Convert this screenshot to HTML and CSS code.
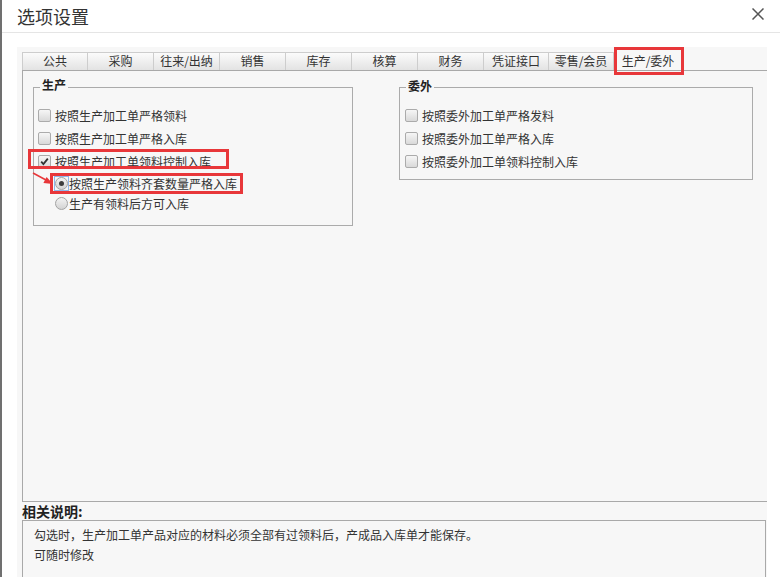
FILE: index.html
```html
<!DOCTYPE html>
<html lang="zh-CN">
<head>
<meta charset="utf-8">
<title>选项设置</title>
<link rel="stylesheet" href="styles.css">
</head>
<body>
<div class="dialog">
  <div class="header">
    <span class="title">选项设置</span>
    <svg class="close" viewBox="0 0 12 12" width="12" height="12"><path d="M0.5 0.5 L11.5 11.5 M11.5 0.5 L0.5 11.5" stroke="#555" stroke-width="1.5" fill="none"/></svg>
  </div>
  <div class="content">
    <div class="tabs">
      <div class="tab">公共</div>
      <div class="tab">采购</div>
      <div class="tab">往来/出纳</div>
      <div class="tab">销售</div>
      <div class="tab">库存</div>
      <div class="tab">核算</div>
      <div class="tab">财务</div>
      <div class="tab narrow">凭证接口</div>
      <div class="tab narrow">零售/会员</div>
      <div class="tab active">生产/委外</div>
    </div>
    <div class="panel">
      <div class="group group-prod">
        <span class="legend">生产</span>
        <div class="row"><span class="cb"></span><span>按照生产加工单严格领料</span></div>
        <div class="row"><span class="cb"></span><span>按照生产加工单严格入库</span></div>
        <div class="row"><span class="cb checked"><svg viewBox="0 0 11 11" width="11" height="11"><path d="M2.2 5.6 L4.4 8 L8.8 2.6" stroke="#333" stroke-width="1.8" fill="none"/></svg></span><span>按照生产加工单领料控制入库</span></div>
        <div class="row radio first"><span class="rb-wrap focus"><span class="rb on"></span></span><span>按照生产领料齐套数量严格入库</span></div>
        <div class="row radio"><span class="rb-wrap"><span class="rb"></span></span><span>生产有领料后方可入库</span></div>
      </div>
      <div class="group group-out">
        <span class="legend">委外</span>
        <div class="row"><span class="cb"></span><span>按照委外加工单严格发料</span></div>
        <div class="row"><span class="cb"></span><span>按照委外加工单严格入库</span></div>
        <div class="row"><span class="cb"></span><span>按照委外加工单领料控制入库</span></div>
      </div>
    </div>
    <div class="desc-label">相关说明:</div>
    <div class="desc">
      <div>勾选时，生产加工单产品对应的材料必须全部有过领料后，产成品入库单才能保存。</div>
      <div>可随时修改</div>
    </div>
  </div>
</div>
<div class="mark mark-tab"></div>
<div class="mark mark-row"></div>
<div class="mark mark-radio"></div>
<svg class="arrow" viewBox="0 0 60 30" width="60" height="30"><path d="M33 173 L46 180" transform="translate(-20,-160)" stroke="#e8373a" stroke-width="1.5" fill="none"/><polygon points="53,184 43.4,183.1 46.6,176.9" transform="translate(-20,-160)" fill="#e8373a"/></svg>
</body>
</html>
```
FILE: styles.css
```css
body {
  margin: 0;
  width: 780px;
  height: 577px;
  overflow: hidden;
  position: relative;
  background: #fff;
  font-family: "Noto Sans CJK SC", "Microsoft YaHei", "Liberation Sans", sans-serif;
  font-size: 12px;
  color: #333;
}

.dialog {
  height: 577px;
  box-sizing: border-box;
  border-left: 2px solid #707070;
}

.header {
  height: 32px;
  border-bottom: 1px solid #e5e5e5;
  display: flex;
  align-items: center;
  justify-content: space-between;
  padding: 0 16px 0 15px;
}

.title {
  font-size: 18px;
  line-height: 20px;
  color: #333;
}

.close {
  display: block;
  margin-top: -4px;
}

.content {
  margin: 14px 0 0 15px;
  width: 750px;
  height: 531px;
  box-sizing: border-box;
  background: #f7f7f7;
  padding: 5px 0 0 5px;
}

.tabs {
  display: flex;
  height: 18px;
}

.tab {
  width: 66px;
  box-sizing: border-box;
  border: 1px solid #cdcdcd;
  border-left: none;
  border-bottom: none;
  background: linear-gradient(#fbfbfb, #e3e3e3);
  text-align: center;
  line-height: 16px;
  color: #333;
}

.tab:first-child {
  border-left: 1px solid #cdcdcd;
}

.tab.narrow {
  width: 65px;
}

.tab.active {
  width: 68px;
  border: none;
  background: transparent;
  line-height: 18px;
}

.panel {
  height: 432px;
  box-sizing: border-box;
  border: 1px solid #a9a9a9;
  border-right: none;
  display: flex;
  align-items: flex-start;
  gap: 46px;
  padding: 16px 0 0 10px;
}

.group {
  position: relative;
  box-sizing: border-box;
  border: 1px solid #ababab;
  padding: 16px 0 0 4px;
}

.group-prod {
  width: 320px;
  height: 139px;
}

.group-out {
  width: 354px;
  height: 93px;
  padding-left: 5px;
}

.legend {
  position: absolute;
  top: -11px;
  left: 6px;
  padding: 0 2px;
  background: #f7f7f7;
  font-weight: bold;
  line-height: 16px;
  color: #222;
}

.group-out .legend {
  top: -10px;
}

.row {
  display: flex;
  align-items: center;
  height: 23px;
  gap: 4px;
  white-space: nowrap;
}

.cb {
  width: 13px;
  height: 13px;
  box-sizing: border-box;
  border: 1px solid #ababab;
  border-radius: 2px;
  background: linear-gradient(#f6f6f6, #d9d9d9);
  display: flex;
  align-items: center;
  justify-content: center;
}

.cb svg {
  display: block;
}

.row.radio {
  height: 19px;
  padding-left: 16px;
  gap: 0;
}

.row.radio.first {
  height: 21px;
}

.rb-wrap {
  width: 15px;
  height: 15px;
  box-sizing: border-box;
  border: 1px solid transparent;
  display: flex;
  align-items: center;
  justify-content: center;
}

.rb-wrap.focus {
  border-color: #8fb6ea;
}

.rb {
  width: 13px;
  height: 13px;
  flex: none;
  box-sizing: border-box;
  border: 1px solid #a3a3a3;
  border-radius: 50%;
  background: linear-gradient(#f3f3f3, #d3d3d3);
  display: flex;
  align-items: center;
  justify-content: center;
}

.rb.on::after {
  content: "";
  width: 5px;
  height: 5px;
  border-radius: 50%;
  background: #3c3c3c;
}

.desc-label {
  font-size: 14px;
  font-weight: bold;
  line-height: 18px;
  color: #222;
}

.desc {
  width: 744px;
  height: 70px;
  box-sizing: border-box;
  border: 1px solid #a9a9a9;
  border-bottom: none;
  padding: 4px 0 0 11px;
  line-height: 20px;
  color: #333;
}

.mark {
  position: absolute;
  box-sizing: border-box;
  border: 3px solid #e8373a;
}

.mark-tab {
  left: 614px;
  top: 47px;
  width: 70px;
  height: 28px;
}

.mark-row {
  left: 28px;
  top: 149px;
  width: 201px;
  height: 20px;
}

.mark-radio {
  left: 50px;
  top: 173px;
  width: 193px;
  height: 21px;
}

.arrow {
  position: absolute;
  left: 20px;
  top: 160px;
}
```
